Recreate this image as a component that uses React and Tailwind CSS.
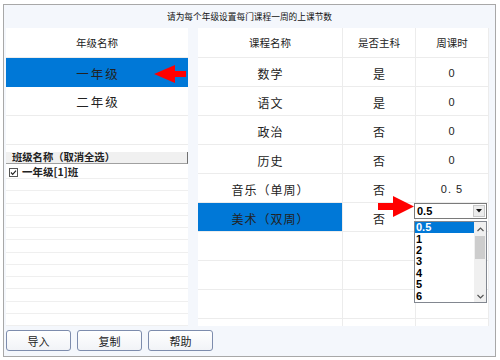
export default function App() {
  const courses = [
    ['数学', '是', '0'],
    ['语文', '是', '0'],
    ['政治', '否', '0'],
    ['历史', '否', '0'],
    ['音乐（单周）', '否', '0. 5'],
    ['美术（双周）', '否', ''],
    ['', '', ''],
    ['', '', ''],
    ['', '', ''],
    ['', '', ''],
  ];
  const classRows = Array.from({ length: 12 });
  const items = ['0.5', '1', '2', '3', '4', '5', '6'];

  return (
    <div className="relative w-[500px] h-[360px] bg-white overflow-hidden font-['Noto_Sans_CJK_SC','Noto_Sans',sans-serif] text-[#222]">
      <div className="ml-[3px] mt-[4px] w-[493px] h-[353px] border border-[#a8a8a8] bg-[#f4f7fc] flex flex-col">
        {/* title */}
        <div className="h-[23px] flex items-center justify-center text-[8.7px] leading-none pt-[1px] text-[#111]">
          请为每个年级设置每门课程一周的上课节数
        </div>

        {/* body */}
        <div className="flex h-[298px] pl-[2px]">
          {/* left column */}
          <div className="w-[182px] h-full bg-white flex flex-col">
            <div className="h-[30px] flex items-center justify-center text-[10.5px] leading-none border-b border-[#ececec] pt-[1px]">
              年级名称
            </div>
            <div className="h-[29px] flex items-center justify-center text-[12.5px] tracking-[2px] leading-none bg-[#0078d7] pt-[3px] pl-[2px]">
              一年级
            </div>
            <div className="h-[29px] flex items-center justify-center text-[12.5px] tracking-[2px] leading-none border-b border-[#ececec] pt-[3px] pl-[2px]">
              二年级
            </div>
            <div className="h-[29px] border-b border-[#ececec]"></div>

            {/* class list */}
            <div className="mt-[7px] flex flex-col">
              <div className="h-[12px] bg-[#f0f0f0] border-b border-[#a0a0a0] border-r border-r-[#707070] flex items-center pl-[6px] text-[10.3px] font-bold leading-none">
                班级名称（取消全选）
              </div>
              <div className="h-[15px] border-b border-[#efefef] flex items-center pl-[3px] pt-[2px] gap-[4px]">
                <svg width="9" height="9" viewBox="0 0 9 9" className="shrink-0">
                  <rect x="0.5" y="0.5" width="8" height="8" fill="#fff" stroke="#555" />
                  <polyline points="2,4.5 3.7,6.3 7,2.6" fill="none" stroke="#222" strokeWidth="1.2" />
                </svg>
                <span className="text-[10.5px] font-bold leading-none">一年级[1]班</span>
              </div>
              {classRows.map((_, i) => (
                <div key={i} className="h-[12.25px] border-b border-[#efefef]"></div>
              ))}
            </div>
          </div>

          {/* right column */}
          <div className="ml-[10px] w-[291px] h-full bg-white overflow-hidden flex flex-col">
            <div className="h-[30px] shrink-0 flex border-b border-[#ececec] text-[10.5px] leading-none">
              <div className="w-[145px] flex items-center justify-center border-r border-[#ececec] pt-[1px]">课程名称</div>
              <div className="w-[73px] flex items-center justify-center border-r border-[#ececec] pt-[1px]">是否主科</div>
              <div className="w-[73px] flex items-center justify-center border-r border-[#ececec] pt-[1px]">周课时</div>
            </div>
            {courses.map((c, i) => (
              <div key={i} className="h-[29px] shrink-0 flex border-b border-[#ececec] leading-none">
                <div
                  className={
                    i === 5
                      ? 'w-[145px] flex items-center justify-center border-r border-[#ececec] bg-[#0078d7] text-[12px] tracking-[1px] pt-[3px] pl-[1px]'
                      : 'w-[145px] flex items-center justify-center border-r border-[#ececec] text-[12px] tracking-[1px] pt-[3px] pl-[1px]'
                  }
                >
                  {c[0]}
                </div>
                <div className="w-[73px] flex items-center justify-center border-r border-[#ececec] text-[12px] pt-[3px]">
                  {c[1]}
                </div>
                <div className="w-[73px] flex items-center justify-center border-r border-[#ececec] text-[11px] tracking-[1px] pt-[2px] font-['Liberation_Sans',sans-serif]">
                  {c[2]}
                </div>
              </div>
            ))}
          </div>
        </div>

        {/* buttons */}
        <div className="flex gap-[6px] pl-[2px] pt-[4px]">
          {['导入', '复制', '帮助'].map((b) => (
            <div
              key={b}
              className="w-[65px] h-[21px] rounded-[3px] border border-[#7d8cad] bg-gradient-to-b from-[#ffffff] to-[#f1f3f7] flex items-center justify-center text-[11px] leading-none pt-[1px]"
            >
              {b}
            </div>
          ))}
        </div>
      </div>

      {/* combo box (editing) */}
      <div className="absolute left-[414px] top-[203px] w-[73px] h-[16px] border border-[#7a7a7a] bg-white flex items-center justify-between pl-[2px] pr-[1px]">
        <span className="text-[11px] font-bold leading-none font-['Liberation_Sans',sans-serif] text-black">0.5</span>
        <div className="w-[12px] h-[12px] bg-[#ececec] border border-[#c8c8c8] flex items-center justify-center">
          <svg width="6" height="4" viewBox="0 0 6 4">
            <polygon points="0,0 6,0 3,3.5" fill="#111" />
          </svg>
        </div>
      </div>

      {/* dropdown list */}
      <div className="absolute left-[414px] top-[221px] w-[73px] h-[82px] border border-[#828790] bg-white flex">
        <div className="w-[59px] flex flex-col">
          {items.map((it, i) => (
            <div
              key={it}
              className={
                i === 0
                  ? 'h-[11.4px] bg-[#0078d7] text-white text-[11px] font-bold leading-none font-[\'Liberation_Sans\',sans-serif] flex items-center pl-[1px]'
                  : 'h-[11.4px] text-black text-[11px] font-bold leading-none font-[\'Liberation_Sans\',sans-serif] flex items-center pl-[1px]'
              }
            >
              {it}
            </div>
          ))}
        </div>
        <div className="w-[12px] h-full bg-[#f0f0f0] flex flex-col items-center">
          <div className="h-[14px] flex items-center justify-center">
            <svg width="7" height="5" viewBox="0 0 7 5">
              <polyline points="0.5,4 3.5,1 6.5,4" fill="none" stroke="#555" strokeWidth="1.2" />
            </svg>
          </div>
          <div className="w-[10px] h-[23px] bg-[#cdcdcd]"></div>
          <div className="flex-1"></div>
          <div className="h-[12px] flex items-center justify-center">
            <svg width="7" height="5" viewBox="0 0 7 5">
              <polyline points="0.5,1 3.5,4 6.5,1" fill="none" stroke="#555" strokeWidth="1.2" />
            </svg>
          </div>
        </div>
      </div>

      {/* red arrows */}
      <svg className="absolute left-0 top-0 pointer-events-none" width="500" height="360" viewBox="0 0 500 360">
        <polygon points="154,74 175,65 175,71 186,71 186,77 175,77 175,83" fill="#ff0000" />
        <polygon points="378,203 393,203 393,196 414,206.5 393,217 393,210 378,210" fill="#ff0000" />
      </svg>
    </div>
  );
}
